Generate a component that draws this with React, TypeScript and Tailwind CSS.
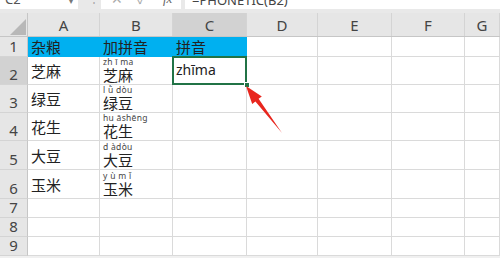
import React from "react";

const colW = [
  "w-[72px] shrink-0",
  "w-[73px] shrink-0",
  "w-[74px] shrink-0",
  "w-[71px] shrink-0",
  "w-[74px] shrink-0",
  "w-[73px] shrink-0",
  "flex-1 min-w-0",
];
const letters = ["A", "B", "C", "D", "E", "F", "G"];

const FONT = "font-['Noto_Sans','Noto_Sans_CJK_SC',sans-serif]";

type Row = {
  n: number;
  h: string;
  a?: string;
  b?: { py: string; t: string } | string;
  c?: string;
  blue?: boolean;
  sel?: boolean;
};

const rows: Row[] = [
  { n: 1, h: "h-[20px]", a: "杂粮", b: "加拼音", c: "拼音", blue: true },
  { n: 2, h: "h-[28px]", a: "芝麻", b: { py: "zh ī ma", t: "芝麻" }, c: "zhīma", sel: true },
  { n: 3, h: "h-[28px]", a: "绿豆", b: { py: "l ǜ dòu", t: "绿豆" } },
  { n: 4, h: "h-[28px]", a: "花生", b: { py: "hu āshēng", t: "花生" } },
  { n: 5, h: "h-[29px]", a: "大豆", b: { py: "d àdòu", t: "大豆" } },
  { n: 6, h: "h-[29px]", a: "玉米", b: { py: "y ù m ǐ", t: "玉米" } },
  { n: 7, h: "h-[19px]" },
  { n: 8, h: "h-[19px]" },
  { n: 9, h: "h-[19px]" },
];

function TextCell({ text, tall }: { text: string; tall?: boolean }) {
  return (
    <div
      className={`text-[15px] leading-[18px] text-[#222] pl-[3px] whitespace-nowrap ${
        tall ? "pb-[4px]" : "pb-[0px]"
      }`}
    >
      {text}
    </div>
  );
}

export default function App() {
  return (
    <div className={`w-[500px] h-[258px] overflow-hidden bg-[#e9e9e9] relative ${FONT}`}>
      {/* formula bar (cut off at top) */}
      <div className="flex h-[9px]">
        <div className="w-[78px] shrink-0 bg-white relative overflow-hidden">
          <div className="absolute left-[5px] top-[-9px] text-[13px] leading-[16px] text-[#555]">C2</div>
          <div className="absolute left-[69px] top-[-4px] text-[8px] leading-[10px] text-[#777]">▾</div>
        </div>
        <div className="w-[23px] shrink-0 relative overflow-hidden">
          <div className="absolute left-[10px] top-[-9px] text-[12px] leading-[14px] text-[#aaa]">⋮</div>
        </div>
        <div className="w-[80px] shrink-0 bg-white relative overflow-hidden">
          <div className="absolute left-[10px] top-[-9px] text-[14px] leading-[16px] text-[#aaa]">✕</div>
          <div className="absolute left-[36px] top-[-9px] text-[14px] leading-[16px] text-[#aaa]">✓</div>
          <div className="absolute left-[62px] top-[-9px] text-[13px] leading-[16px] italic text-[#666] font-['Liberation_Serif',serif]">
            fx
          </div>
        </div>
        <div className="w-[4px] shrink-0" />
        <div className="flex-1 bg-white relative overflow-hidden">
          <div className="absolute left-[7px] top-[-8px] text-[13px] leading-[16px] text-[#444]">=PHONETIC(B2)</div>
        </div>
      </div>
      <div className="h-[4px]" />

      {/* column headers */}
      <div className="flex h-[24px] border-b border-[#c6c6c6]">
        <div className="w-[28px] shrink-0 relative border-r border-[#c6c6c6] bg-[#e6e6e6]">
          <svg className="absolute left-[10px] top-[6px]" width="16" height="16" viewBox="0 0 16 16">
            <polygon points="16,0 16,16 0,16" fill="#b8b8b8" />
          </svg>
        </div>
        {letters.map((l, i) => (
          <div
            key={l}
            className={`${colW[i]} flex items-end justify-center pb-[2px] text-[15px] leading-[18px] text-[#444] border-r border-[#d4d4d4] ${
              i === 2 ? "bg-[#d2d2d2]" : "bg-[#e6e6e6]"
            }`}
          >
            {l}
          </div>
        ))}
      </div>

      {rows.map((r) => (
        <div key={r.n} className={`flex ${r.h}`}>
          <div
            className={`w-[28px] shrink-0 flex items-end justify-center pb-[1px] text-[15px] leading-[18px] text-[#444] border-b border-[#d4d4d4] border-r border-r-[#c6c6c6] ${
              r.sel ? "bg-[#d2d2d2]" : "bg-[#e6e6e6]"
            }`}
          >
            {r.n}
          </div>
          {colW.map((w, i) => {
            const blue = r.blue && i < 3;
            const tall = !r.blue && r.n <= 6;
            const base = `${w} flex flex-col justify-end border-r border-b ${
              blue ? "bg-[#00b0f0] border-[#00b0f0] border-r-[#00b0f0]" : "bg-white border-[#dadada]"
            }`;
            if (i === 0)
              return (
                <div key={i} className={base}>
                  {r.a && <TextCell text={r.a} tall={tall} />}
                </div>
              );
            if (i === 1) {
              const b = r.b;
              return (
                <div key={i} className={base}>
                  {typeof b === "string" && <TextCell text={b} />}
                  {b && typeof b !== "string" && (
                    <div className="pl-[3px] pb-[0px] flex flex-col">
                      <div className="text-[8.5px] leading-[10px] tracking-[0.3px] text-[#444] whitespace-nowrap font-['Noto_Sans',sans-serif]">
                        {b.py}
                      </div>
                      <div className="text-[15px] leading-[17px] text-[#222] whitespace-nowrap">{b.t}</div>
                    </div>
                  )}
                </div>
              );
            }
            if (i === 2 && r.sel)
              return (
                <div key={i} className={`${w} relative bg-white border-b border-r border-[#dadada]`}>
                  <div className="absolute left-[-1px] top-[-1px] right-[-1px] bottom-[-1px] border-2 border-[#217346] flex items-end">
                    <div className="text-[14px] leading-[18px] text-[#222] pl-[2px] pb-[4px] font-['Noto_Sans',sans-serif]">
                      {r.c}
                    </div>
                  </div>
                  <div className="absolute right-[-4px] bottom-[-4px] w-[6px] h-[6px] bg-[#217346] border border-white" />
                </div>
              );
            return (
              <div key={i} className={base}>
                {i === 2 && r.c && <TextCell text={r.c} />}
              </div>
            );
          })}
        </div>
      ))}
      <div className="h-[10px] bg-[#f0f0f0]" />

      {/* red arrow annotation */}
      <svg className="absolute left-0 top-0 pointer-events-none" width="500" height="258">
        <polygon points="282,133 255.4,101.5 252.2,104 246,86 261.8,96.6 258.6,98.8" fill="#e8261e" />
      </svg>
    </div>
  );
}
